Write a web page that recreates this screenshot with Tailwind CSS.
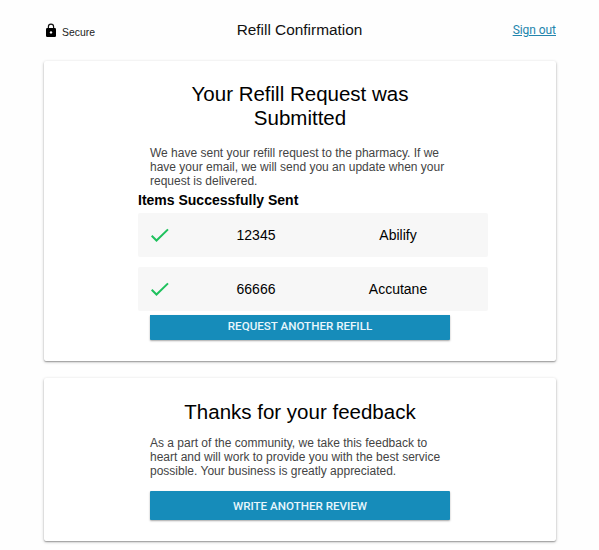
<!DOCTYPE html>
<html lang="en">
<head>
<meta charset="utf-8">
<title>Refill Confirmation</title>
<script src="https://cdn.jsdelivr.net/npm/@tailwindcss/browser@4"></script>
</head>
<body class="h-[550px] w-[599px] overflow-hidden bg-[#fefefe] font-['Liberation_Sans',Arial,sans-serif] text-black">
<header class="grid h-[61px] grid-cols-3 px-[43px] leading-none">
  <div class="flex items-start pt-[23px] pl-[3px]">
    <svg class="h-[14px] w-[10px]" viewBox="0 0 10 14" fill="none"><path d="M2.4 6V3.7a2.6 2.6 0 0 1 5.2 0V6" stroke="#111" stroke-width="1.2"/><rect y="5" width="10" height="9" rx="1.2" fill="#000"/><circle cx="5" cy="9.4" r="1.2" fill="#fff"/></svg>
    <span class="ml-[6px] pt-[5px] text-[10.4px] text-[#222]">Secure</span>
  </div>
  <h1 class="pt-[22px] text-center text-[15.4px] whitespace-nowrap text-[#111]">Refill Confirmation</h1>
  <a class="pt-[24px] text-right font-[Roboto,sans-serif] text-[12px] tracking-[-0.05px] text-[#2385ad] underline underline-offset-1">Sign out</a>
</header>
<main class="flex flex-col gap-[17px] pr-[43px] pl-[44px]">
  <section class="h-[300px] rounded-[2px] bg-white pt-[21px] shadow-[0_1px_3px_rgba(0,0,0,0.3),0_1px_1px_rgba(0,0,0,0.2)]">
    <h2 class="text-center text-[20.5px] leading-6">Your Refill Request was<br>Submitted</h2>
    <p class="ml-[106px] pt-[16px] text-[12px] leading-[14px] whitespace-nowrap text-[#444]">We have sent your refill request to the pharmacy. If we<br>have your email, we will send you an update when your<br>request is delivered.</p>
    <h3 class="ml-[94px] pt-[3px] text-[14px] leading-[18px] font-bold">Items Successfully Sent</h3>
    <ul class="mt-[4px] ml-[94px] flex w-[350px] flex-col gap-[10px] text-center text-[14px]">
      <li class="flex h-[44px] items-center rounded-[2px] bg-[#f7f7f7]">
        <svg class="ml-[13px] h-[14px] w-[18px]" viewBox="0 0 18 14" fill="none" stroke="#1fc15d" stroke-width="2"><path d="M.7 7.8 5.5 12.5 17 1.4"/></svg>
        <span class="ml-[16px] w-[142px]">12345</span><span class="w-[142px]">Abilify</span>
      </li>
      <li class="flex h-[44px] items-center rounded-[2px] bg-[#f7f7f7]">
        <svg class="ml-[13px] h-[14px] w-[18px]" viewBox="0 0 18 14" fill="none" stroke="#1fc15d" stroke-width="2"><path d="M.7 7.8 5.5 12.5 17 1.4"/></svg>
        <span class="ml-[16px] w-[142px]">66666</span><span class="w-[142px]">Accutane</span>
      </li>
    </ul>
    <button class="mt-[4px] ml-[106px] flex h-[25px] w-[300px] items-center justify-center rounded-b-[1px] bg-[#168cba] pb-[1px] font-[Roboto,sans-serif] text-[11.6px] font-medium text-[#e8f6fc] shadow-[0_1px_2px_rgba(0,0,0,0.35)]">REQUEST ANOTHER REFILL</button>
  </section>
  <section class="h-[163px] rounded-[2px] bg-white pt-[22px] shadow-[0_1px_3px_rgba(0,0,0,0.3),0_1px_1px_rgba(0,0,0,0.2)]">
    <h2 class="text-center text-[20.5px] leading-6">Thanks for your feedback</h2>
    <p class="ml-[106px] pt-[12px] text-[12px] leading-[14px] whitespace-nowrap text-[#444]">As a part of the community, we take this feedback to<br>heart and will work to provide you with the best service<br>possible. Your business is greatly appreciated.</p>
    <button class="mt-[13px] ml-[106px] flex h-[29px] w-[300px] items-center justify-center rounded-[1px] bg-[#168cba] pt-[2px] font-[Roboto,sans-serif] text-[11.6px] font-medium text-[#e8f6fc] shadow-[0_1px_2px_rgba(0,0,0,0.35)]">WRITE ANOTHER REVIEW</button>
  </section>
</main>
</body>
</html>
